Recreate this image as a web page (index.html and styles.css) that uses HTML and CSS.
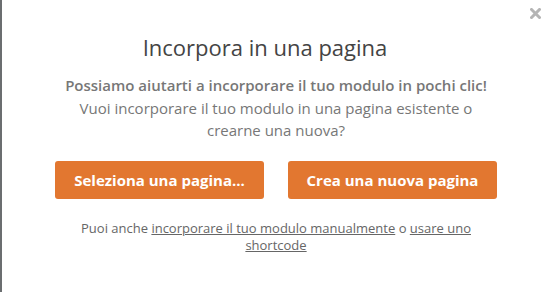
FILE: index.html
```html
<!DOCTYPE html>
<html lang="it">
<head>
  <meta charset="UTF-8" />
  <meta name="viewport" content="width=device-width, initial-scale=1.0"/>
  <title>Incorpora in una pagina</title>
  <link rel="stylesheet" href="styles.css">
</head>
<body>
  <div class="modal">
    <button class="modal-close" aria-label="Chiudi">
      <svg width="11" height="11" viewBox="0 0 11 11">
        <path d="M1.5 1.5 L9.5 9.5 M9.5 1.5 L1.5 9.5" stroke="#b4b4b4" stroke-width="3" stroke-linecap="square"/>
      </svg>
    </button>

    <h1 class="modal-title">Incorpora in una pagina</h1>

    <div class="modal-text">
      <p class="lead">Possiamo aiutarti a incorporare il tuo modulo in pochi clic!</p>
      <p>Vuoi incorporare il tuo modulo in una pagina esistente o<br>crearne una nuova?</p>
    </div>

    <div class="modal-actions">
      <button type="button" class="btn">Seleziona una pagina...</button>
      <button type="button" class="btn">Crea una nuova pagina</button>
    </div>

    <p class="modal-footer">
      Puoi anche <a href="#">incorporare il tuo modulo manualmente</a> o <a href="#">usare uno<br>shortcode</a>
    </p>
  </div>
</body>
</html>
```

FILE: styles.css
```css
:root {
  --orange: #e27730;
  --text-dark: #444444;
  --text-muted: #777777;
  --font-family: "Open Sans", "Noto Sans", sans-serif;
}

* {
  margin: 0;
  padding: 0;
  box-sizing: border-box;
}

body {
  height: 292px;
  overflow: hidden;
  background: #6b6e70;
  font-family: var(--font-family);
  padding-left: 2px;
}

.modal {
  position: relative;
  background: #ffffff;
  height: 292px;
  display: flex;
  flex-direction: column;
  align-items: center;
  padding-top: 31px;
}

.modal-close {
  position: absolute;
  top: 8px;
  right: 9px;
  border: none;
  background: none;
  cursor: pointer;
  line-height: 0;
}

.modal-title {
  font-size: 22px;
  font-weight: 500;
  color: var(--text-dark);
  line-height: 32px;
  margin-right: 22px;
}

.modal-text {
  margin-top: 11px;
  text-align: center;
  font-size: 15px;
  line-height: 22px;
  color: var(--text-muted);
}

.modal-text .lead {
  font-weight: 600;
  margin-bottom: 1px;
}

.modal-actions {
  margin-top: 20px;
  display: flex;
  gap: 24px;
}

.btn {
  width: 209px;
  height: 38px;
  background: var(--orange);
  color: #ffffff;
  border: none;
  border-radius: 3px;
  font-family: var(--font-family);
  font-size: 15px;
  font-weight: 700;
  cursor: pointer;
}

.modal-footer {
  margin-top: 21px;
  text-align: center;
  font-size: 13px;
  line-height: 17px;
  color: #666666;
}

.modal-footer a {
  color: #666666;
}
```
